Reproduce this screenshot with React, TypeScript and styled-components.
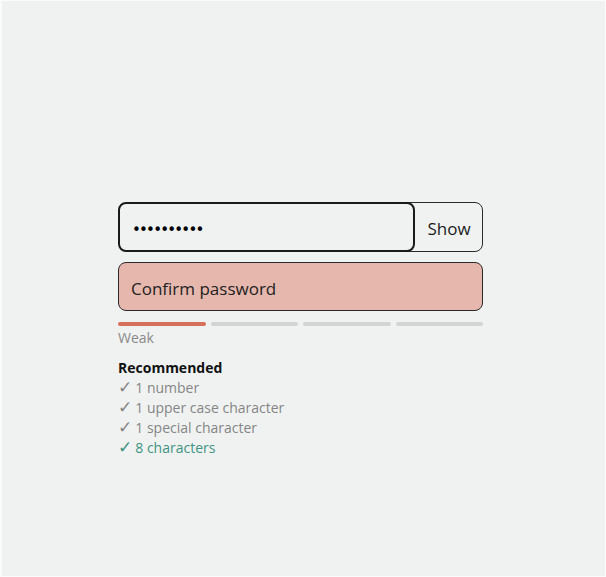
import React from 'react';
import styled, { createGlobalStyle } from 'styled-components';

const GlobalStyle = createGlobalStyle`
  html, body {
    margin: 0;
    padding: 0;
    background: #fbfbfb;
  }
  body {
    font-family: 'Open Sans', 'Noto Sans', sans-serif;
  }
`;

const Page = styled.div`
  box-sizing: border-box;
  margin: 1px 1px 1px 2px;
  height: 575px;
  background: #f0f2f1;
  padding: 201px 0 0 116px;
`;

const Form = styled.div`
  width: 365px;
  display: flex;
  flex-direction: column;
`;

const PasswordRow = styled.div`
  display: flex;
  height: 50px;
`;

const Field = styled.input<{ $error?: boolean }>`
  box-sizing: border-box;
  height: 49px;
  border-radius: 8px;
  padding: 3px 12px 0;
  font-family: 'Open Sans', sans-serif;
  font-size: 17px;
  color: #1c1c1c;
  outline: none;
  background: ${({ $error }) => ($error ? '#e6b7ac' : '#f0f2f1')};
  border: ${({ $error }) => ($error ? '1px solid #2a2a2a' : '2px solid #1a1a1a')};

  &::placeholder {
    color: #222;
    opacity: 1;
  }
`;

const PasswordField = styled(Field)`
  position: relative;
  z-index: 1;
  width: 297px;
  height: 50px;
  padding-top: 5px;
  font-family: 'DejaVu Sans', sans-serif;
  font-size: 15px;
  letter-spacing: -1.8px;
  color: #000;
`;

const ShowButton = styled.button`
  box-sizing: border-box;
  flex: 1;
  margin-left: -10px;
  height: 50px;
  padding: 2px 0 0 10px;
  border: 1px solid #2a2a2a;
  border-radius: 0 8px 8px 0;
  background: #f0f2f1;
  font-family: 'Open Sans', sans-serif;
  font-size: 17px;
  color: #1c1c1c;
`;

const ConfirmField = styled(Field)`
  margin-top: 10px;
  width: 100%;
`;

const Meter = styled.div`
  display: grid;
  grid-template-columns: repeat(4, 1fr);
  gap: 5px;
  margin-top: 11px;
`;

const Segment = styled.div<{ $on: boolean }>`
  height: 4px;
  border-radius: 2px;
  background: ${({ $on }) => ($on ? '#d6705a' : '#d3d4d4')};
`;

const Strength = styled.div`
  margin-top: 2px;
  font-size: 14px;
  line-height: 20px;
  color: #8a8a8a;
`;

const Heading = styled.div`
  margin-top: 10px;
  font-size: 14px;
  line-height: 20px;
  font-weight: 700;
  color: #111;
`;

const Rule = styled.div<{ $met: boolean }>`
  font-size: 14px;
  line-height: 20px;
  height: 20px;
  color: ${({ $met }) => ($met ? '#3f9483' : '#858585')};
`;

const Check = styled.span`
  display: inline-block;
  font-family: 'DejaVu Sans', sans-serif;
  font-size: 17px;
  line-height: 14px;
  margin-right: 3px;
`;

const rules = [
  { text: '1 number', met: false },
  { text: '1 upper case character', met: false },
  { text: '1 special character', met: false },
  { text: '8 characters', met: true },
];

export default function App() {
  return (
    <>
      <GlobalStyle />
      <Page>
        <Form>
          <PasswordRow>
            <PasswordField type="password" defaultValue="abcdefghij" />
            <ShowButton>Show</ShowButton>
          </PasswordRow>
          <ConfirmField $error placeholder="Confirm password" type="password" />
          <Meter>
            {[true, false, false, false].map((on, i) => (
              <Segment key={i} $on={on} />
            ))}
          </Meter>
          <Strength>Weak</Strength>
          <Heading>Recommended</Heading>
          {rules.map((r) => (
            <Rule key={r.text} $met={r.met}>
              <Check>✓</Check>
              {r.text}
            </Rule>
          ))}
        </Form>
      </Page>
    </>
  );
}
